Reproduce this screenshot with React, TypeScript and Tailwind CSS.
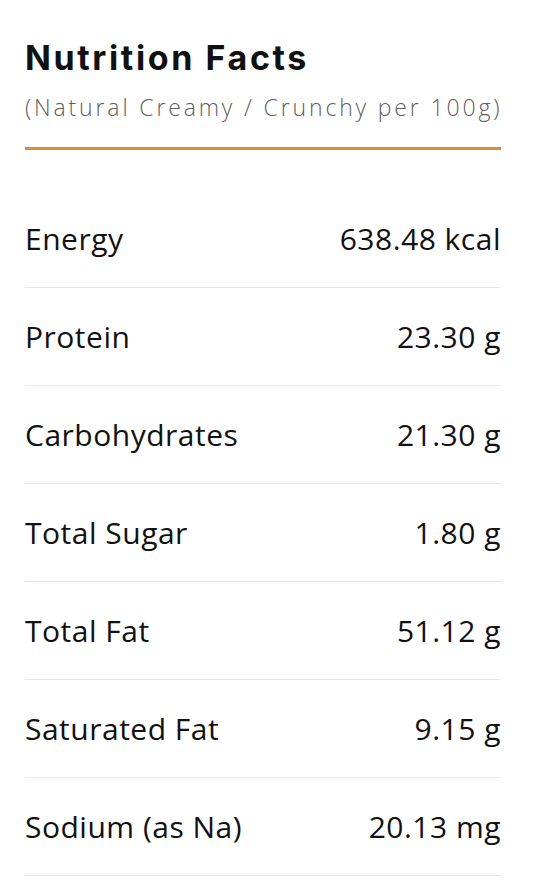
const rows = [
  { label: "Energy", value: "638.48 kcal" },
  { label: "Protein", value: "23.30 g" },
  { label: "Carbohydrates", value: "21.30 g" },
  { label: "Total Sugar", value: "1.80 g" },
  { label: "Total Fat", value: "51.12 g" },
  { label: "Saturated Fat", value: "9.15 g" },
  { label: "Sodium (as Na)", value: "20.13 mg" },
];

export default function App() {
  return (
    <div className="min-h-screen w-[539px] bg-white pl-[25px] pr-[38px] pt-[36px] text-[#111]">
      <h1 className="font-['Inter',sans-serif] text-[34px] font-bold leading-[44px] tracking-[2.6px] text-[#111]">
        Nutrition Facts
      </h1>
      <p className="mt-[12px] whitespace-nowrap font-['Open_Sans',sans-serif] text-[23px] font-light leading-[30px] tracking-[2.85px] text-[#5f5f5f]">
        (Natural Creamy / Crunchy per 100g)
      </p>
      <div className="mt-[25px] h-[3px] w-full bg-[#d98b3b]" />
      <div className="mt-[40px] font-['Open_Sans',sans-serif]">
        {rows.map((r) => (
          <div
            key={r.label}
            className="flex h-[98px] items-center justify-between border-b border-[#e8e8e8] text-[30px] font-medium tracking-[0.5px]"
          >
            <span>{r.label}</span>
            <span>{r.value}</span>
          </div>
        ))}
      </div>
    </div>
  );
}
